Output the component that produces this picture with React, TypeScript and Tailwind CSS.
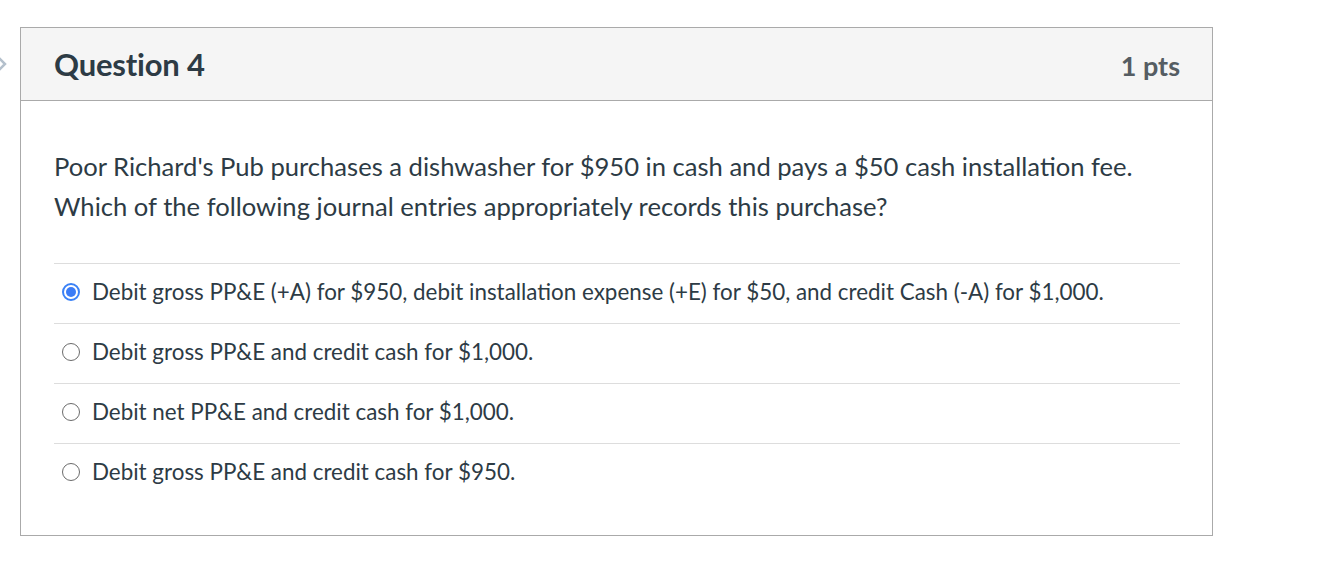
const answers = [
  { text: "Debit gross PP&E (+A) for $950, debit installation expense (+E) for $50, and credit Cash (-A) for $1,000.", checked: true },
  { text: "Debit gross PP&E and credit cash for $1,000.", checked: false },
  { text: "Debit net PP&E and credit cash for $1,000.", checked: false },
  { text: "Debit gross PP&E and credit cash for $950.", checked: false },
];

function Radio({ checked }: { checked: boolean }) {
  if (checked) {
    return (
      <span className="flex h-[18px] w-[18px] shrink-0 items-center justify-center rounded-full border-2 border-[#3b82f6] bg-white">
        <span className="h-[10px] w-[10px] rounded-full bg-[#3b7cf6]" />
      </span>
    );
  }
  return <span className="h-[18px] w-[18px] shrink-0 rounded-full border border-[#6b6b6b] bg-white" />;
}

export default function App() {
  return (
    <div className="relative min-h-[578px] bg-white pt-[27px] font-['Lato','Noto_Sans',sans-serif] text-[#2d3b45]">
      <svg className="absolute left-[-6px] top-[55px] h-[18px] w-[14px]" viewBox="0 0 14 18" fill="none" stroke="#b4c0cc" strokeWidth="2.5">
        <path d="M4 2l7 7-7 7" />
      </svg>
      <div className="ml-[20px] w-[1193px] border border-[#aaaaaa]">
        <div className="flex h-[73px] items-center justify-between border-b border-[#aaaaaa] bg-[#f5f5f5] pl-[33px] pr-[32px]">
          <h2 className="text-[31px] font-bold tracking-[-0.2px]">Question 4</h2>
          <span className="pt-[4px] text-[27px] font-bold text-[#555d63]">1 pts</span>
        </div>
        <div className="px-[33px] pb-[32px] pt-[45px]">
          <p className="text-[25.6px] leading-[40px]">
            Poor Richard's Pub purchases a dishwasher for $950 in cash and pays a $50 cash installation fee.
            <br />
            Which of the following journal entries appropriately records this purchase?
          </p>
          <div className="mt-[37px] mr-[-1px]">
            {answers.map((a, i) => (
              <div key={i} className="flex h-[60px] items-center gap-[12px] border-t border-[#dddddd] pb-[3px] pl-[8px]">
                <Radio checked={a.checked} />
                <span className="text-[22.4px] leading-[28px]">{a.text}</span>
              </div>
            ))}
          </div>
        </div>
      </div>
    </div>
  );
}
